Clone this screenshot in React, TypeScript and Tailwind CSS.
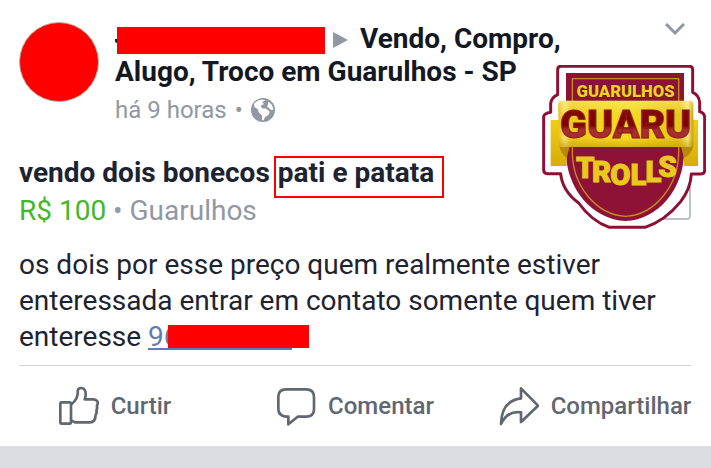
import type { ReactNode } from "react";

function Globe() {
    return (
        <svg viewBox="0 0 24 24" className="size-6 shrink-0" aria-hidden="true">
            <circle cx="12" cy="12" r="12" fill="#9197a3" />
            <path
                d="M3 5.500L7 2.500L11 1.500L14.500 2.500L11 4L13 6L9.500 8L11.500 10.500L15 10.500L18.500 13.500L18 16.500L14 19L12.500 22.500L11 22L11 17.500L7.500 14L7 11.500L3.500 9Z"
                fill="#fff"
            />
            <path d="M17.500 3.500L21 7L22.500 11.500L20 12L17.500 9.500L16 9L17 6.500Z" fill="#fff" />
        </svg>
    );
}

function LikeIcon() {
    return (
        <svg viewBox="0 0 120 120" className="size-10" fill="none" stroke="#616770" strokeWidth="8" strokeLinejoin="round" strokeLinecap="round" aria-hidden="true">
            <rect x="4" y="49" width="32" height="64" rx="4" />
            <path d="M38 54C51 44 58 32 56 14Q58 5 68 6Q82 9 80 29L77 40H104Q118 42 116 54Q112 60 115 66Q111 72 113 80Q108 87 109 96Q105 109 92 109H48L38 104" />
        </svg>
    );
}

function CommentIcon() {
    return (
        <svg viewBox="0 0 120 120" className="size-10" fill="none" stroke="#616770" strokeWidth="8" strokeLinejoin="round" aria-hidden="true">
            <path d="M30 10H90Q114 10 114 33V70Q114 92 90 92H65L37 115V92H31Q7 90 7 68V33Q7 10 30 10Z" />
        </svg>
    );
}

function ShareIcon() {
    return (
        <svg viewBox="0 0 120 120" className="size-10" fill="none" stroke="#616770" strokeWidth="8" strokeLinejoin="round" aria-hidden="true">
            <path d="M66 7L117 59L66 108V79C38 75 19 87 6 114C7 68 27 42 66 37Z" />
        </svg>
    );
}

function GroupBadge() {
    return (
        <svg
            viewBox="36 30 492 492"
            className="absolute right-[5px] top-[65px] size-[164px]"
            fontFamily="Impact, Roboto, sans-serif"
            fontWeight="900"
            textAnchor="middle"
            role="img"
            aria-label="Guarulhos Guaru Trolls"
        >
            <defs>
                <linearGradient id="ribbon" x1="0" y1="0" x2="1" y2="0">
                    <stop offset="0" stopColor="#e3bd1e" />
                    <stop offset="0.05" stopColor="#f8e368" />
                    <stop offset="0.1" stopColor="#eccb1c" />
                    <stop offset="0.5" stopColor="#f5da22" />
                    <stop offset="0.9" stopColor="#e8c517" />
                    <stop offset="0.96" stopColor="#f9e878" />
                    <stop offset="1" stopColor="#c89c09" />
                </linearGradient>
                <linearGradient id="shade" x1="0" y1="0" x2="0" y2="1">
                    <stop offset="0" stopColor="#fff8a0" stopOpacity="0.4" />
                    <stop offset="0.3" stopColor="#fff8a0" stopOpacity="0" />
                    <stop offset="0.8" stopColor="#a77b00" stopOpacity="0" />
                    <stop offset="1" stopColor="#a77b00" stopOpacity="0.4" />
                </linearGradient>
                <linearGradient id="tail" x1="0" y1="0" x2="0" y2="1">
                    <stop offset="0" stopColor="#f0cf12" />
                    <stop offset="1" stopColor="#d7ac08" />
                </linearGradient>
                <linearGradient id="wine" x1="0" y1="0" x2="0" y2="1">
                    <stop offset="0" stopColor="#8c0808" />
                    <stop offset="0.5" stopColor="#7d0505" />
                    <stop offset="0.6" stopColor="#a82f2f" />
                    <stop offset="1" stopColor="#a22b2b" />
                </linearGradient>
            </defs>
            <path
                d="M83 44Q83 34 93 34H478Q488 34 488 44V112Q507 120 509 142V170Q524 174 524 188V345Q524 357 512 357H484Q482 400 452 440Q405 498 345 517H238Q185 499 146 444Q97 408 92 356H52Q41 356 41 345V185Q43 175 62 172V145Q64 128 83 119Z"
                fill="#fff"
                stroke="#8b1235"
                strokeWidth="9"
                strokeLinejoin="round"
            />
            <path d="M108 54H462V290C462 400 385 494 287 498C187 494 108 400 108 290Z" fill="#8e1236" />
            <path d="M127 71H446V290C446 392 374 480 287 484C199 480 127 392 127 290Z" fill="none" stroke="#c58d20" strokeWidth="4" />
            <path d="M62 195H110V333H62Z" fill="url(#tail)" />
            <path d="M462 195H504V333H462Z" fill="url(#tail)" />
            <path d="M88 272H120L110 308Q94 300 88 272ZM490 272H452L462 308Q484 300 490 272Z" fill="#b98a08" />
            <path d="M98 137H478Q490 137 490 150V276H88L84 150Q84 137 98 137Z" fill="url(#ribbon)" />
            <path d="M98 137H478Q490 137 490 150V276H88L84 150Q84 137 98 137Z" fill="url(#shade)" />
            <text x="287" y="127" fontSize="50" fill="#efd024" stroke="#56101d" strokeWidth="3" paintOrder="stroke">GUARULHOS</text>
            <text x="287" y="250" fontSize="118" fill="url(#wine)" stroke="#8f1717" strokeWidth="3">GUARU</text>
            <text fontSize="88" fill="#e9c91c" stroke="#e9c91c" strokeWidth="3">
                <tspan x="166" y="368">T</tspan>
                <tspan x="215" y="382">R</tspan>
                <tspan x="271" y="390">O</tspan>
                <tspan x="325" y="390">L</tspan>
                <tspan x="370" y="382">L</tspan>
                <tspan x="412" y="367">S</tspan>
            </text>
        </svg>
    );
}

function ActionButton({ icon, label }: { icon: ReactNode; label: string }) {
    return (
        <button type="button" className="flex items-center justify-center gap-3 text-2xl font-medium text-[#616770]">
            {icon}
            {label}
        </button>
    );
}

function App() {
    return (
        <main className="bg-[#dcdde2] pb-[22px] font-[Roboto,sans-serif]">
            <article className="relative overflow-hidden bg-white pr-5 pl-[19px] pt-[22px]">
                <header className="flex items-start gap-4">
                    <div className="size-20 shrink-0 rounded-full border border-[#b5b3a8] bg-[#ff0000]" />
                    <div className="min-w-0 flex-1">
                        <h1 className="max-w-[480px] text-[28px] leading-[33px] font-bold text-[#141823]">
                            <span className="inline-block h-1 w-0.5 rounded-bl-sm bg-[#141823] align-middle" />
                            <span className="mr-2 inline-block h-[27px] w-[208px] bg-[#ff0000] align-middle" />
                            <svg viewBox="0 0 15 16" className="mr-3 inline-block h-4 w-[15px] align-baseline" aria-hidden="true">
                                <path d="M0 0L15 8L0 16Z" fill="#9197a3" />
                            </svg>
                            Vendo, Compro, Alugo, Troco em Guarulhos - SP
                        </h1>
                        <p className="mt-1 flex items-center gap-2 text-2xl leading-9 text-[#9197a3]">
                            <span>há 9 horas</span>
                            <span>•</span>
                            <Globe />
                        </p>
                    </div>
                    <button type="button" aria-label="Opções da publicação" className="mt-px mr-1.5 shrink-0">
                        <svg viewBox="0 0 20 12" className="h-3 w-5" fill="none" stroke="#9197a3" strokeWidth="3">
                            <path d="M1 1L10 10L19 1" />
                        </svg>
                    </button>
                </header>

                <section className="mt-[26px] flex items-end justify-between">
                    <div>
                        <h2 className="flex items-baseline text-[28px] leading-[38px] font-bold text-[#1d2330]">
                            vendo dois bonecos
                            <mark className="ml-1 box-content h-[38px] border-2 border-[#ff0000] bg-transparent pr-2 pl-0.5 leading-[30px] text-inherit">
                                pati e patata
                            </mark>
                        </h2>
                        <p className="-mt-1 text-[28px] leading-[34px] text-[#9197a3]">
                            <span className="text-[#42b72a]">R$ 100</span> • Guarulhos
                        </p>
                    </div>
                    <button type="button" aria-label="Salvar" className="mb-2 size-10 rounded-sm border-2 border-[#bec3c9]" />
                </section>

                <p className="mt-[19px] max-w-[660px] text-[28px] leading-9 text-[#1d2330]">
                    os dois por esse preço quem realmente estiver enteressada entrar em contato somente quem tiver enteresse{" "}
                    <a href="#contato" className="relative inline-flex h-[30px] w-36 border-b-2 border-[#5f7ab5] align-text-top leading-[34px] text-[#5f7ab5]">
                        96
                        <span className="absolute top-[5px] left-5 h-[23px] w-[141px] bg-[#ff0000]" />
                    </a>
                </p>

                <footer className="mt-2.5 border-t border-[#ced0d4]">
                    <div className="-mx-6 grid h-20 grid-cols-3">
                        <ActionButton icon={<LikeIcon />} label="Curtir" />
                        <ActionButton icon={<CommentIcon />} label="Comentar" />
                        <ActionButton icon={<ShareIcon />} label="Compartilhar" />
                    </div>
                </footer>

                <GroupBadge />
            </article>
        </main>
    );
}

export default App;
